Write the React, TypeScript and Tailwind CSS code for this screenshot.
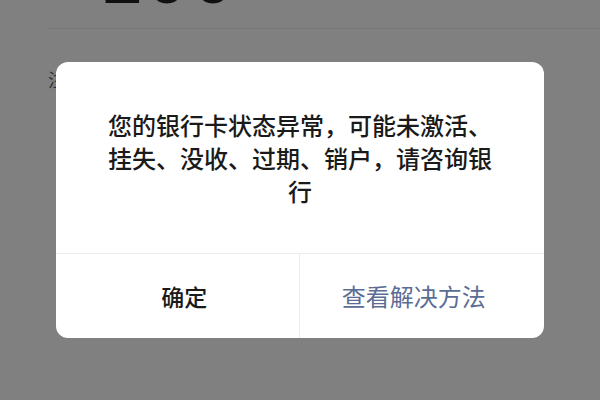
export default function App() {
    return (
        <div className="relative w-[600px] h-[400px] overflow-hidden bg-[#808080] font-['Noto_Sans_CJK_SC',sans-serif]">
            {/* page behind the mask */}
            <div className="pl-[48px]">
                <div className="ml-[53px] -mt-[58px] h-[72px] leading-[72px] text-[72px] tracking-[6px] font-bold text-[#111] font-['Liberation_Sans',Arial,sans-serif]">100</div>
                <div className="mt-[14px] h-px bg-[#767676]" />
                <div className="mt-[40px] text-[18px] leading-[20px] text-[#333]">注</div>
            </div>

            {/* alert dialog */}
            <div className="absolute left-[56px] top-[62px] w-[488px] h-[276px] flex flex-col rounded-[12px] bg-white overflow-hidden">
                <div className="flex-1 flex items-center justify-center px-[44px]">
                    <p className="w-[400px] text-center text-[24px] leading-[33px] font-medium text-[#1a1a1a]">
                        您的银行卡状态异常，可能未激活、挂失、没收、过期、销户，请咨询银行
                    </p>
                </div>
                <div className="h-[85px] flex border-t border-[#ececec]">
                    <button type="button" className="flex-1 flex items-center justify-center pl-[14px] text-[23px] font-medium text-[#1a1a1a] border-r border-[#ececec]">
                        确定
                    </button>
                    <button type="button" className="flex-1 flex items-center justify-center pr-[16px] text-[24px] text-[#5b6d95]">
                        查看解决方法
                    </button>
                </div>
            </div>
        </div>
    )
}
